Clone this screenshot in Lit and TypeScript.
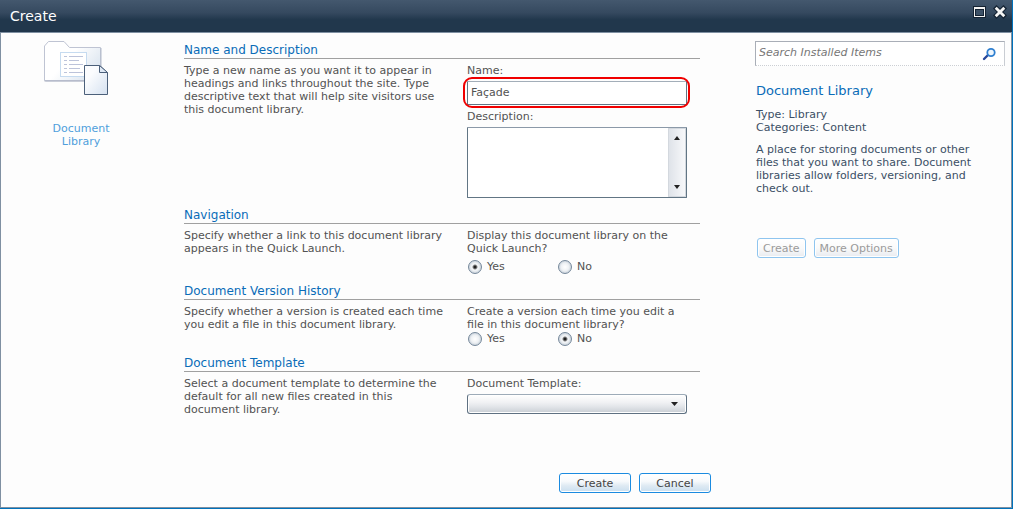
import { LitElement, html, css, nothing } from "lit";
import { customElement, state } from "lit/decorators.js";

@customElement("app-root")
export class AppRoot extends LitElement {
  @state() private quickLaunch = "yes";
  @state() private versioning = "no";

  static styles = css`
    :host {
      display: block;
      font-family: "DejaVu Sans", Verdana, sans-serif;
      font-size: 11px;
      line-height: 13px;
      color: #525252;
    }
    * {
      box-sizing: border-box;
    }
    h1,
    h2,
    p {
      margin: 0;
      font-weight: normal;
    }
    button,
    input,
    textarea,
    select {
      font: inherit;
      color: inherit;
      margin: 0;
    }
    .dialog {
      display: flex;
      flex-direction: column;
      min-height: 100vh;
      background: #fdfdfd;
      border-right: 1px solid #0072bc;
      border-bottom: 1px solid #0072bc;
    }
    .titlebar {
      display: flex;
      align-items: center;
      justify-content: space-between;
      height: 32px;
      padding: 0 5px 0 10px;
      background: linear-gradient(#44586e 0, #35495f 40%, #21374c 62%, #21374c 100%);
      color: #fff;
    }
    .title {
      font-size: 14px;
      line-height: 20px;
    }
    .window-buttons {
      display: flex;
      gap: 6px;
      padding-bottom: 8px;
    }
    .icon-button {
      display: block;
      padding: 0;
      border: 0;
      background: none;
      line-height: 0;
    }
    .body {
      flex: 1;
      display: grid;
      grid-template-columns: 160px minmax(0, 1fr) 250px;
      border: 1px solid #7f90a2;
      padding: 8px 6px 14px 0;
    }
    .type {
      display: flex;
      flex-direction: column;
      align-items: center;
      gap: 26px;
      color: #4f9fdc;
      text-align: center;
      text-decoration: none;
    }
    .type-name {
      width: 80px;
    }
    .main {
      display: flex;
      flex-direction: column;
      justify-content: space-between;
      padding: 0 44px 0 23px;
    }
    .sections {
      display: flex;
      flex-direction: column;
      gap: 8px;
      padding-right: 11px;
    }
    .heading {
      padding-top: 1px;
      font-size: 12px;
      line-height: 16px;
      color: #0a6cb8;
      border-bottom: 1px solid #a0a0a0;
    }
    .section-body {
      display: grid;
      grid-template-columns: minmax(0, 1fr) 220px;
      column-gap: 20px;
      padding: 5px 13px 0 0;
    }
    .fields {
      display: flex;
      flex-direction: column;
    }
    .fields.spaced {
      gap: 4px;
    }
    .highlight {
      position: relative;
      display: flex;
      margin-bottom: 1px;
    }
    .highlight::after {
      content: "";
      position: absolute;
      inset: -4px -3px -3px -4px;
      border: 2px solid #f00000;
      border-radius: 9px;
      pointer-events: none;
    }
    .text {
      width: 100%;
      height: 24px;
      padding: 0 3px 2px;
      border: 1px solid #617584;
      border-top-color: #a3aeb9;
      border-radius: 1px;
      background: #fff;
      outline: none;
    }
    .multiline {
      display: flex;
      height: 71px;
      border: 1px solid #617584;
      border-top-color: #8b99a8;
      border-radius: 1px;
      background: #fff;
    }
    .area {
      flex: 1;
      min-width: 0;
      border: 0;
      padding: 3px;
      resize: none;
      outline: none;
      background: none;
      overflow: hidden;
    }
    .scroll {
      display: flex;
      flex-direction: column;
      justify-content: space-between;
      align-items: center;
      width: 18px;
      padding: 7px 0;
      border: 1px solid #d3d8de;
      background: linear-gradient(90deg, #dfe3e9, #f7f8fa);
    }
    .radios {
      display: grid;
      grid-template-columns: 90px 90px;
      height: 15px;
    }
    .radio {
      display: flex;
      align-items: center;
      gap: 5px;
      padding-left: 1px;
    }
    .radio input {
      appearance: none;
      width: 14px;
      height: 14px;
      border: 1px solid #75879a;
      border-radius: 50%;
      background: radial-gradient(circle, #ffffff 0, #eef1f4 45%, #cfd7df 70%);
    }
    .radio input:checked {
      background: radial-gradient(circle, #222 0, #222 1px, #f4f6f8 3px, #eef1f4 45%, #cfd7df 70%);
    }
    .dropdown {
      position: relative;
      display: flex;
    }
    .dropdown select {
      appearance: none;
      width: 100%;
      height: 20px;
      border: 1px solid #5f7182;
      border-top-color: #9dabb8;
      border-radius: 3px;
      background: linear-gradient(#ffffff 0, #f1f2f4 40%, #e2e5e9 65%, #c9ced4 100%);
      box-shadow: inset 0 0 0 1px #ffffff;
    }
    .arrow {
      position: absolute;
      right: 9px;
      top: 8px;
      pointer-events: none;
    }
    .actions {
      display: flex;
      justify-content: flex-end;
      gap: 8px;
      padding-top: 16px;
    }
    .button {
      min-width: 72px;
      height: 20px;
      padding: 0 5px;
      border: 1px solid #1b8be0;
      border-radius: 3px;
      background: linear-gradient(#ffffff 0, #f8fafc 40%, #dfeaf3 65%, #c9dfef 100%);
      box-shadow: inset 0 0 0 1px #ffffff;
      color: #444;
    }
    .button:disabled {
      min-width: 0;
      border-color: #8fc5ef;
      background: linear-gradient(#ffffff 0, #fafafa 50%, #e8ebf0 100%);
      color: #9b9b9b;
    }
    .side {
      display: flex;
      flex-direction: column;
      color: #3b4f65;
    }
    .search {
      display: flex;
      align-items: center;
      height: 25px;
      padding: 0 8px 0 3px;
      border: 1px solid #a9aeb7;
      border-right-color: #c9cdd3;
      border-bottom: 1px dotted #cccfd4;
      background: #fff;
    }
    .search input {
      flex: 1;
      min-width: 0;
      padding: 0 0 2px;
      border: 0;
      background: none;
      outline: none;
      font-style: italic;
    }
    .search input::placeholder {
      color: #767676;
      opacity: 1;
    }
    .details {
      display: flex;
      flex-direction: column;
      gap: 9px;
      padding: 16px 20px 0 1px;
    }
    .side-title {
      font-size: 13px;
      line-height: 17px;
      color: #0a6cb8;
    }
    .side-actions {
      display: flex;
      gap: 8px;
      padding: 34px 0 0 1px;
    }
  `;

  private radios(name: string, value: string, label: string, pick: (v: string) => void) {
    return html`<div class="radios" role="radiogroup" aria-label=${label}>
      ${["Yes", "No"].map(
        (text) => html`<label class="radio">
          <input
            type="radio"
            name=${name}
            .checked=${value === text.toLowerCase()}
            @change=${() => pick(text.toLowerCase())}
          />${text}
        </label>`
      )}
    </div>`;
  }

  private section(title: string, description: string, fields: unknown, spaced = false) {
    return html`<section>
      <h2 class="heading">${title}</h2>
      <div class="section-body">
        <p>${description}</p>
        <div class="fields ${spaced ? "spaced" : ""}">${fields ?? nothing}</div>
      </div>
    </section>`;
  }

  render() {
    return html`<div class="dialog">
      <header class="titlebar">
        <h1 class="title">Create</h1>
        <div class="window-buttons">
          <button class="icon-button" aria-label="Maximize">
            <svg width="14" height="14" viewBox="0 0 14 14" shape-rendering="crispEdges">
              <rect x="0" y="1" width="13" height="12" fill="#142232" />
              <rect x="1" y="2" width="11" height="10" fill="#f2f2f2" />
              <rect x="2" y="4" width="9" height="7" fill="#142232" />
              <rect x="3" y="5" width="7" height="5" fill="#3c5066" />
            </svg>
          </button>
          <button class="icon-button" aria-label="Close">
            <svg width="14" height="14" viewBox="0 0 14 14">
              <path d="M3.500 3.500l7 7M10.500 3.500l-7 7" stroke="#142232" stroke-width="5" stroke-linecap="square" />
              <path d="M3.700 3.700l6.600 6.600M10.300 3.700l-6.600 6.600" stroke="#f4f4f4" stroke-width="2.800" stroke-linecap="square" />
            </svg>
          </button>
        </div>
      </header>
      <div class="body">
        <a class="type" href="#">
          <svg width="78" height="55" viewBox="0 1 78 55" fill="none">
            <defs>
              <linearGradient id="folder" x1="0" y1="0" x2="1" y2="0.600">
                <stop offset="0.500" stop-color="#ffffff" />
                <stop offset="1" stop-color="#dde6f0" />
              </linearGradient>
              <linearGradient id="page" x1="0" y1="0" x2="1" y2="1">
                <stop offset="0.300" stop-color="#fbfcfe" />
                <stop offset="1" stop-color="#d5e1f0" />
              </linearGradient>
            </defs>
            <path d="M3.500 41.500h58" stroke="#e6e9ee" />
            <path d="M2.500 40.500V6l4-4.500h15.500l5.500 6h31v33z" fill="url(#folder)" stroke="#bfc4d3" />
            <path d="M59 8v33" stroke="#b3bccb" />
            <path d="M2.500 41h56" stroke="#aeb4c4" />
            <rect x="18.500" y="12.500" width="26" height="24" fill="#fff" stroke="#c6dbf0" />
            <path
              d="M22 16.500h3M27 16.500h14M22 20.500h3M27 20.500h10M22 24.500h3M27 24.500h14M22 28.500h3M27 28.500h11M22 32.500h3M27 32.500h14"
              stroke="#bcc3da"
            />
            <path d="M42.500 25.500h15l8 7v22h-23z" fill="url(#page)" stroke="#4c607a" />
            <path d="M57.500 25.500v7h8z" fill="#dfe9f5" stroke="#4c607a" />
          </svg>
          <span class="type-name">Document Library</span>
        </a>
        <main class="main">
          <div class="sections">
            ${this.section(
              "Name and Description",
              "Type a new name as you want it to appear in headings and links throughout the site. Type descriptive text that will help site visitors use this document library.",
              html`<label for="name">Name:</label>
                <div class="highlight"><input class="text" id="name" type="text" value="Façade" /></div>
                <label for="description">Description:</label>
                <div class="multiline">
                  <textarea class="area" id="description"></textarea>
                  <div class="scroll" aria-hidden="true">
                    <svg width="6" height="4" viewBox="0 0 6 4"><path d="M0 4L3 0l3 4z" fill="#222" /></svg>
                    <svg width="6" height="4" viewBox="0 0 6 4"><path d="M0 0h6L3 4z" fill="#222" /></svg>
                  </div>
                </div>`,
              true
            )}
            ${this.section(
              "Navigation",
              "Specify whether a link to this document library appears in the Quick Launch.",
              html`<p>Display this document library on the Quick Launch?</p>
                ${this.radios("nav", this.quickLaunch, "Display on the Quick Launch", (v) => (this.quickLaunch = v))}`,
              true
            )}
            ${this.section(
              "Document Version History",
              "Specify whether a version is created each time you edit a file in this document library.",
              html`<p>Create a version each time you edit a file in this document library?</p>
                ${this.radios("versions", this.versioning, "Create a version", (v) => (this.versioning = v))}`
            )}
            ${this.section(
              "Document Template",
              "Select a document template to determine the default for all new files created in this document library.",
              html`<label for="template">Document Template:</label>
                <div class="dropdown">
                  <select id="template"><option></option></select>
                  <svg class="arrow" width="7" height="4" viewBox="0 0 7 4"><path d="M0 0h7L3.500 4z" fill="#222" /></svg>
                </div>`,
              true
            )}
          </div>
          <footer class="actions">
            <button class="button">Create</button>
            <button class="button">Cancel</button>
          </footer>
        </main>
        <aside class="side">
          <div class="search">
            <input type="text" placeholder="Search Installed Items" aria-label="Search Installed Items" />
            <button class="icon-button" aria-label="Search">
              <svg width="14" height="14" viewBox="0 0 14 14" fill="none">
                <path d="M2 12l4-4" stroke="#27479a" stroke-width="2.400" stroke-linecap="round" />
                <circle cx="9" cy="5.500" r="3.700" fill="#eef6fd" stroke="#2f7fd0" stroke-width="1.800" />
              </svg>
            </button>
          </div>
          <div class="details">
            <h2 class="side-title">Document Library</h2>
            <div>
              <p>Type: Library</p>
              <p>Categories: Content</p>
            </div>
            <p>
              A place for storing documents or other files that you want to share. Document libraries allow folders,
              versioning, and check out.
            </p>
            <div class="side-actions">
              <button class="button" disabled>Create</button>
              <button class="button" disabled>More Options</button>
            </div>
          </div>
        </aside>
      </div>
    </div>`;
  }
}
